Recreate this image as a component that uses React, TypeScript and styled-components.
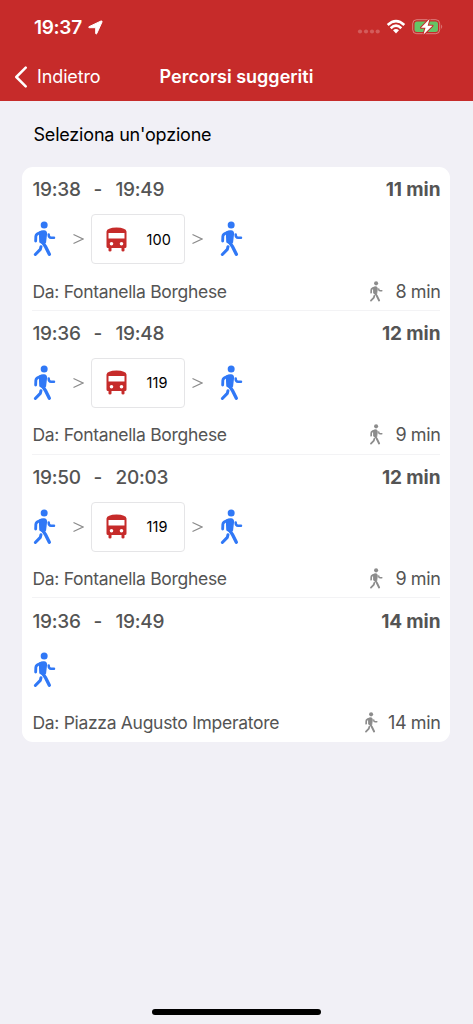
import React from "react";
import styled, { createGlobalStyle } from "styled-components";

const GlobalStyle = createGlobalStyle`
  * { box-sizing: border-box; }
  html, body { margin: 0; background: #f1f0f6; }
  body { font-family: Inter, "Liberation Sans", sans-serif; }
`;

const Screen = styled.main`
  display: flex;
  flex-direction: column;
  width: 473px;
  height: 1024px;
  overflow: hidden;
  background: #f1f0f6;
`;

const Header = styled.header`
  height: 101px;
  flex: none;
  background: #c62b2a;
  color: #fff;
`;

const StatusBar = styled.div`
  display: flex;
  align-items: center;
  height: 53px;
  padding: 1px 31px 0 34px;
`;

const Clock = styled.span`
  width: 54px;
  font-size: 19px;
  font-weight: 600;
  letter-spacing: -0.3px;
  white-space: nowrap;
`;

const StatusIcons = styled.div`
  display: flex;
  align-items: center;
  margin-left: auto;
`;

const NavBar = styled.nav`
  display: grid;
  grid-template-columns: 146px 181px 146px;
  align-items: center;
  height: 47px;
`;

const BackButton = styled.button`
  display: flex;
  align-items: center;
  gap: 9px;
  padding: 0 0 0 14px;
  border: 0;
  background: none;
  color: inherit;
  font: inherit;
  font-size: 18px;
  letter-spacing: -0.12px;
`;

const Title = styled.h1`
  margin: 0;
  font-size: 18px;
  font-weight: 600;
  letter-spacing: 0;
  text-align: center;
  white-space: nowrap;
`;

const Prompt = styled.h2`
  height: 66px;
  margin: 0;
  padding-left: 33.5px;
  font-size: 18px;
  font-weight: 400;
  line-height: 67px;
  letter-spacing: -0.19px;
  color: #000;
`;

const Card = styled.section`
  width: 428px;
  margin-left: 22.4px;
  padding: 0 10px;
  border-radius: 11px;
  background: #fff;
`;

const Route = styled.article`
  display: flex;
  flex-direction: column;
  height: 143.75px;
  border-bottom: 1px solid #f3f3f5;
  color: #545454;
  &:last-child { border-bottom-color: transparent; }
`;

const Line = styled.div<{ $bottom?: boolean }>`
  display: flex;
  flex: none;
  align-items: center;
  justify-content: space-between;
  height: ${(p) => (p.$bottom ? "44.25px" : "45.5px")};
  padding-top: ${(p) => (p.$bottom ? "7px" : "0")};
`;

const Times = styled.div`
  display: flex;
  font-size: 19px;
  font-weight: 450;
  letter-spacing: -0.22px;
`;

const Time = styled.span`
  width: 61px;
`;

const Dash = styled.span`
  width: 22px;
`;

const Duration = styled.strong`
  font-size: 19px;
  font-weight: 650;
  letter-spacing: -0.1px;
`;

const Steps = styled.div`
  display: flex;
  flex: none;
  align-items: center;
  height: 53px;
`;

const Chevron = styled.span<{ $after?: boolean }>`
  width: ${(p) => (p.$after ? "34px" : "35px")};
  padding-left: ${(p) => (p.$after ? "7px" : "16.5px")};
  color: #8b8b8b;
  display: flex;
`;

const BusBadge = styled.div`
  display: flex;
  align-items: center;
  justify-content: space-between;
  width: 94px;
  height: 50px;
  padding: 0 13px 0 14px;
  border: 1px solid #e5e5e7;
  border-radius: 4px;
`;

const LineNumber = styled.span`
  width: 25px;
  color: #000;
  font-size: 14.5px;
  letter-spacing: 0.1px;
`;

const Origin = styled.span`
  font-size: 17.5px;
  letter-spacing: -0.3px;
`;

const Walk = styled.div<{ $wide: boolean }>`
  display: flex;
  align-items: center;
  gap: ${(p) => (p.$wide ? "10px" : "12px")};
  font-size: 18px;
  letter-spacing: -0.4px;
`;

const Footer = styled.footer`
  display: flex;
  justify-content: center;
  margin-top: auto;
  padding-bottom: 9px;
`;

const HomeIndicator = styled.div`
  width: 169px;
  height: 6px;
  border-radius: 3px;
  background: #000;
`;

const Walker = ({ width, height, color }: { width: number; height: number; color: string }) => (
  <svg width={width} height={height} viewBox="1 1 72 108" fill="none" stroke={color} strokeLinecap="round" strokeLinejoin="round">
    <circle cx="37.500" cy="13" r="10.500" fill={color} stroke="none" />
    <path d="M24 34Q30 30 37 31Q44 32 44 39L41 65L36 70L25 64L24 42Z" fill={color} strokeWidth="4.500" />
    <path d="M28 35Q13 39 12.500 47L12 61" strokeWidth="8.500" />
    <path d="M31 62L41 77L53 101" strokeWidth="10" />
    <path d="M28 78L26 86L11 101.500" strokeWidth="9" />
    <path d="M51 41.500Q51 51 58 51H67" strokeWidth="7.500" />
  </svg>
);

const Bus = () => (
  <svg width="21" height="25" viewBox="0 0 21 25">
    <path fill="#c62b2a" fillRule="evenodd" d="M.5 4.5Q1 .8 10.5.5Q20 .8 20.5 4.5V19.5Q20.5 21 19 21H18.5V23.5Q18.5 24.5 17 24.5T15.5 23.5V21H5.5V23.5Q5.500 24.500 4 24.500T2.500 23.500V21H2Q.5 21 .5 19.500ZM2.500 6V11.500H18.500V6ZM5.500 15A1.800 1.800 0 1 0 5.500 18.600A1.800 1.800 0 1 0 5.500 15ZM15.500 15A1.800 1.800 0 1 0 15.500 18.600A1.800 1.800 0 1 0 15.500 15Z" />
  </svg>
);

const Arrow = () => (
  <svg width="11" height="12" viewBox="0 0 11 12" fill="none" stroke="currentColor" strokeWidth="1.2">
    <path d="M.5 1.500L10 6L.5 10.500" />
  </svg>
);

const routes = [
  { start: "19:38", end: "19:49", total: "11 min", bus: "100", from: "Fontanella Borghese", walk: "8 min" },
  { start: "19:36", end: "19:48", total: "12 min", bus: "119", from: "Fontanella Borghese", walk: "9 min" },
  { start: "19:50", end: "20:03", total: "12 min", bus: "119", from: "Fontanella Borghese", walk: "9 min" },
  { start: "19:36", end: "19:49", total: "14 min", from: "Piazza Augusto Imperatore", walk: "14 min" },
];

export default function App() {
  return (
    <Screen>
      <GlobalStyle />
      <Header>
        <StatusBar>
          <Clock>19:37</Clock>
          <svg width="15" height="15" viewBox="0 0 15 15"><path d="M1 6.700L13 1Q14.400 .6 14 2L8.700 13.700Q8 14.700 7.700 13.500V7.700H1.300Q0 7.300 1 6.700Z" fill="#fff" stroke="#fff" strokeWidth="1" /></svg>
          <StatusIcons>
            <svg width="90" height="20" viewBox="-1.500 -.5 90 20" overflow="visible">
              <g fill="#fff" fillOpacity=".23">
                <circle cx="6.500" cy="14" r="2.100" /><circle cx="12.500" cy="14" r="2.100" /><circle cx="18.500" cy="14" r="2.100" /><circle cx="24.200" cy="14" r="2.100" />
              </g>
              <g fill="none" stroke="#fff" strokeWidth="2.600">
                <path d="M34.200 7.500Q42.500 -.3 50.800 7.500" /><path d="M37.200 10.700Q42.500 5.700 47.800 10.700" />
              </g>
              <path d="M39.500 12.700Q42.500 10.300 45.500 12.700L42.500 16Z" fill="#fff" />
              <rect x="59.200" y="2.200" width="27" height="14" rx="4" fill="none" stroke="#fff" strokeOpacity=".4" />
              <path d="M87.700 7Q89.700 9.200 87.700 11.500Z" fill="#fff" fillOpacity=".4" />
              <rect x="61" y="4" width="23.500" height="10.500" rx="2.500" fill="#65c466" />
              <path d="M76 1.500L67.500 10.200H72L70 17L79 8.200H74.200Z" fill="#fff" stroke="#c62b2a" strokeWidth="2" paintOrder="stroke" strokeLinejoin="round" />
            </svg>
          </StatusIcons>
        </StatusBar>
        <NavBar>
          <BackButton>
            <svg width="14" height="22" viewBox="0 0 14 22" fill="none" stroke="#fff" strokeWidth="2.500" strokeLinecap="round" strokeLinejoin="round"><path d="M11.700 1.700L2.300 11L11.700 20.300" /></svg>
            Indietro
          </BackButton>
          <Title>Percorsi suggeriti</Title>
        </NavBar>
      </Header>
      <Prompt>Seleziona un'opzione</Prompt>
      <Card>
        {routes.map((r, i) => (
          <Route key={i}>
            <Line>
              <Times><Time>{r.start}</Time><Dash>-</Dash><span>{r.end}</span></Times>
              <Duration>{r.total}</Duration>
            </Line>
            <Steps>
              <Walker width={24} height={36} color="#3078f6" />
              {r.bus && (
                <>
                  <Chevron><Arrow /></Chevron>
                  <BusBadge><Bus /><LineNumber>{r.bus}</LineNumber></BusBadge>
                  <Chevron $after><Arrow /></Chevron>
                  <Walker width={24} height={36} color="#3078f6" />
                </>
              )}
            </Steps>
            <Line $bottom>
              <Origin>Da: {r.from}</Origin>
              <Walk $wide={r.walk.length > 5}><Walker width={14} height={21} color="#8c8c8c" />{r.walk}</Walk>
            </Line>
          </Route>
        ))}
      </Card>
      <Footer><HomeIndicator /></Footer>
    </Screen>
  );
}
